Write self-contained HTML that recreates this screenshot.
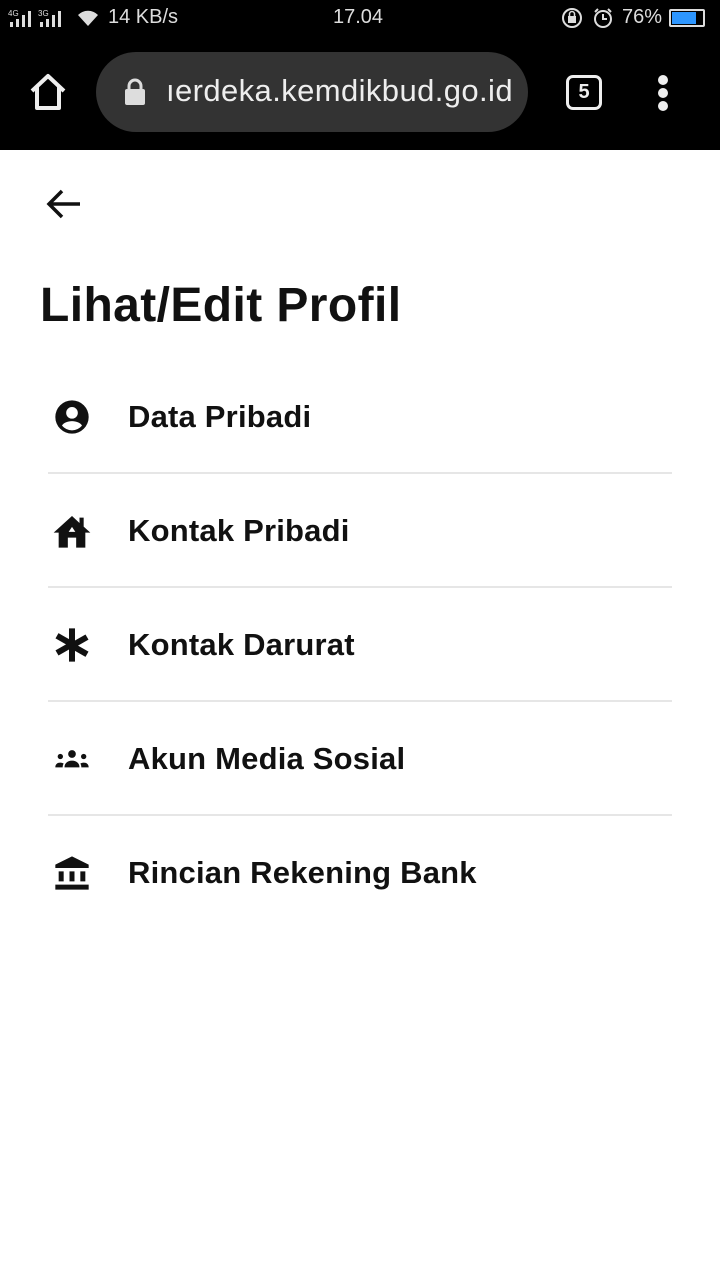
<!DOCTYPE html>
<html><head><meta charset="utf-8"><style>
*{margin:0;padding:0;box-sizing:border-box}
body{width:720px;height:1280px;background:#fff;font-family:"Liberation Sans",sans-serif;position:relative;overflow:hidden}
.top{position:absolute;left:0;top:0;width:720px;height:150px;background:#000;color:#fff}
.sb{position:absolute;top:6px;font-size:20px;color:#ddd}
.url{position:absolute;left:96px;top:52px;width:432px;height:80px;border-radius:40px;background:#333}
.url span{position:absolute;left:70px;top:21px;font-size:31px;color:#eee;letter-spacing:0.4px;white-space:nowrap}
h1{position:absolute;left:40px;top:278px;font-size:48px;font-weight:700;color:#111;letter-spacing:0.4px}
.row{position:absolute;left:48px;width:624px;height:114px;border-bottom:2px solid #e6e6e6}
.row span{position:absolute;left:80px;top:39px;font-size:31px;font-weight:700;color:#111;letter-spacing:0.2px}
.row svg{position:absolute;left:4px;top:37px}
</style></head><body>
<div class="top">
<svg style="position:absolute;left:8px;top:8px" width="62" height="20" viewBox="0 0 62 20"><text x="0" y="8" font-size="8" fill="#ddd" font-family="Liberation Sans">4G</text><rect x="2" y="14" width="3" height="5" fill="#ddd"/><rect x="8" y="11" width="3" height="8" fill="#ddd"/><rect x="14" y="7" width="3" height="12" fill="#ddd"/><rect x="20" y="3" width="3" height="16" fill="#ddd"/><text x="30" y="8" font-size="8" fill="#ddd" font-family="Liberation Sans">3G</text><rect x="32" y="14" width="3" height="5" fill="#ddd"/><rect x="38" y="11" width="3" height="8" fill="#ddd"/><rect x="44" y="7" width="3" height="12" fill="#ddd"/><rect x="50" y="3" width="3" height="16" fill="#ddd"/></svg>
<svg style="position:absolute;left:76px;top:8px" width="24" height="20" viewBox="0 0 24 20"><path d="M12 18 L2 7 A14 14 0 0 1 22 7 Z" fill="#ddd"/></svg>
<div class="sb" style="left:108px">14 KB/s</div>
<div class="sb" style="left:333px">17.04</div>
<svg style="position:absolute;left:562px;top:7px" width="52" height="22" viewBox="0 0 52 22"><circle cx="10" cy="11" r="9" fill="none" stroke="#ddd" stroke-width="2"/><rect x="6" y="9" width="8" height="7" fill="#ddd"/><path d="M7.5 9V7a2.5 2.5 0 0 1 5 0v2" fill="none" stroke="#ddd" stroke-width="1.5"/><circle cx="41" cy="12" r="8" fill="none" stroke="#ddd" stroke-width="2"/><path d="M41 7v5h4" fill="none" stroke="#ddd" stroke-width="2"/><path d="M33 5l3-3M49 5l-3-3" stroke="#ddd" stroke-width="2"/></svg>
<div class="sb" style="left:622px">76%</div>
<div style="position:absolute;left:669px;top:9px;width:36px;height:18px;border:2px solid #ddd;border-radius:2px"><div style="margin:1px;width:24px;height:12px;background:#2d96ff"></div></div>
<svg style="position:absolute;left:28px;top:72px" width="40" height="40" viewBox="0 0 40 40"><path d="M4 19 L20 4 L36 19 M9 15 V36 H31 V15" fill="none" stroke="#eee" stroke-width="4" stroke-linejoin="round"/></svg>
<div class="url"><svg style="position:absolute;left:28px;top:26px" width="22" height="28" viewBox="0 0 22 28"><path d="M5 12 V8 A6 6 0 0 1 17 8 V12" fill="none" stroke="#ddd" stroke-width="3"/><rect x="1" y="11" width="20" height="16" rx="2" fill="#ddd"/></svg><span>ıerdeka.kemdikbud.go.id</span></div>
<div style="position:absolute;left:566px;top:75px;width:36px;height:35px;border:3.5px solid #eee;border-radius:7px;color:#eee;font-size:20px;font-weight:700;text-align:center;line-height:28px">5</div>
<div style="position:absolute;left:658px;top:75px;width:10px">
<div style="width:10px;height:10px;border-radius:5px;background:#eee;margin-bottom:3px"></div><div style="width:10px;height:10px;border-radius:5px;background:#eee;margin-bottom:3px"></div><div style="width:10px;height:10px;border-radius:5px;background:#eee"></div></div>
</div>
<svg style="position:absolute;left:44px;top:186px" width="40" height="36" viewBox="0 0 40 36"><path d="M36 18 H6 M18 5 L5 18 L18 31" fill="none" stroke="#111" stroke-width="3.5"/></svg>
<h1>Lihat/Edit Profil</h1>
<div class="row" style="top:360px"><svg width="40" height="40" viewBox="0 0 24 24"><path fill="#111" d="M12 2a10 10 0 1 0 0 20 10 10 0 0 0 0-20zm0 4a3.5 3.5 0 1 1 0 7 3.5 3.5 0 0 1 0-7zm0 14a8 8 0 0 1-6-2.8c.8-1.6 3.4-2.7 6-2.7s5.2 1.1 6 2.7A8 8 0 0 1 12 20z"/></svg><span>Data Pribadi</span></div>
<div class="row" style="top:474px"><svg width="40" height="40" viewBox="0 0 24 24"><path fill="#111" d="M12 3 L1 13 H4 V22 H9.5 V16 H14.5 V22 H20 V13 H23 L19 9.4 V4 H16.5 V7.2 Z M10 12.5 L12 9.5 L14 12.5 Z"/></svg><span>Kontak Pribadi</span></div>
<div class="row" style="top:588px"><svg width="40" height="40" viewBox="0 0 24 24"><path fill="#111" d="M10.2 2h3.6v7.3l6.3-3.6 1.8 3.1-6.3 3.6 6.3 3.6-1.8 3.1-6.3-3.6V22h-3.6v-7.3l-6.3 3.6-1.8-3.1 6.3-3.6-6.3-3.6 1.8-3.1 6.3 3.6z"/></svg><span>Kontak Darurat</span></div>
<div class="row" style="top:702px"><svg width="40" height="40" viewBox="0 0 24 24"><circle cx="12" cy="9" r="2.3" fill="#111"/><circle cx="5" cy="10.5" r="1.6" fill="#111"/><circle cx="19" cy="10.5" r="1.6" fill="#111"/><path fill="#111" d="M7.5 17c0-2.6 2-4 4.5-4s4.5 1.4 4.5 4z M2 17c0-1.8 1.2-2.8 3-2.8 1 0 1.6.3 2 .6-.4.6-.6 1.3-.6 2.2z M22 17c0-1.8-1.2-2.8-3-2.8-1 0-1.6.3-2 .6.4.6.6 1.3.6 2.2z"/></svg><span>Akun Media Sosial</span></div>
<div class="row" style="top:816px;border:none"><svg width="40" height="40" viewBox="0 0 24 24"><path fill="#111" d="M12 2 L2 7 V9 H22 V7 Z M4 11 H7 V17 H4 Z M10.5 11 H13.5 V17 H10.5 Z M17 11 H20 V17 H17 Z M2 19 H22 V22 H2 Z"/></svg><span>Rincian Rekening Bank</span></div>
</body></html>
